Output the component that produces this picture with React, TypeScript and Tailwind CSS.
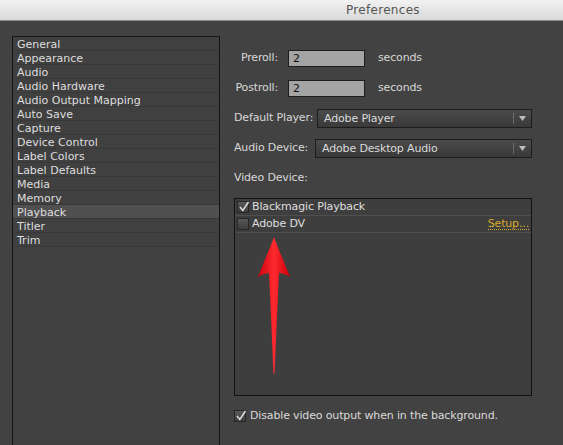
import React from 'react';

const categories = [
  'General',
  'Appearance',
  'Audio',
  'Audio Hardware',
  'Audio Output Mapping',
  'Auto Save',
  'Capture',
  'Device Control',
  'Label Colors',
  'Label Defaults',
  'Media',
  'Memory',
  'Playback',
  'Titler',
  'Trim',
];

const font = { fontFamily: '"DejaVu Sans", "Liberation Sans", sans-serif' };

const CheckBox: React.FC<{ checked?: boolean }> = ({ checked }) => (
  <span className="relative inline-block w-[12px] h-[12px] border border-[#262626] bg-gradient-to-b from-[#5a5a5a] to-[#3c3c3c] shrink-0">
    {checked && (
      <svg className="absolute left-[0px] top-[-1px]" width="12" height="12" viewBox="0 0 12 12">
        <path d="M2 6 L4.8 9.5 L10.5 1" fill="none" stroke="#dcdcdc" strokeWidth="1.5" />
      </svg>
    )}
  </span>
);

const Dropdown: React.FC<{ value: string; width: string }> = ({ value, width }) => (
  <div className={`flex items-center h-[19px] ${width} border border-[#1c1c1c] bg-gradient-to-b from-[#4b4b4b] to-[#393939] text-[#dadada]`}>
    <span className="flex-1 pl-[6px] text-[11px] leading-none">{value}</span>
    <span className="w-px h-[11px] bg-[#6a6a6a]" />
    <span className="w-[17px] flex justify-center">
      <svg width="7" height="5" viewBox="0 0 7 5">
        <path d="M0 0 H7 L3.5 5 Z" fill="#bdbdbd" />
      </svg>
    </span>
  </div>
);

const RedArrow: React.FC = () => (
  <svg className="absolute left-[22px] top-[37px]" width="34" height="140" viewBox="0 0 34 140">
    <defs>
      <linearGradient id="ar" x1="0" x2="1" y1="0" y2="0">
        <stop offset="0" stopColor="#c8000a" />
        <stop offset="0.5" stopColor="#ff2a2f" />
        <stop offset="1" stopColor="#c8000a" />
      </linearGradient>
    </defs>
    <path
      d="M17 1 C13 12 6 28 1 41 C6 38 10 37 12 37 L16.5 138 L17.5 138 L22 37 C24 37 28 38 33 41 C28 28 21 12 17 1 Z"
      fill="url(#ar)"
    />
  </svg>
);

export default function App() {
  return (
    <div className="w-[563px] h-[445px] overflow-hidden bg-[#424242] flex flex-col" style={font}>
      <div className="h-[21px] shrink-0 bg-gradient-to-b from-[#f2f2f2] to-[#d9d9d9] border-b border-[#8c8c8c] flex items-center">
        <span className="ml-[346px] text-[12px] text-[#555555] leading-none tracking-[0.3px]">Preferences</span>
      </div>
      <div className="flex flex-1">
        <div className="ml-[12px] mt-[15px] w-[208px] h-[460px] border border-[#141414] bg-[#404040] shrink-0">
          {categories.map((c) => (
            <div
              key={c}
              className={`h-[14px] pl-[4px] pt-[1px] border-b border-[#383838] text-[11px] leading-[13px] text-[#dedede] ${
                c === 'Playback' ? 'bg-[#505050]' : ''
              }`}
            >
              {c}
            </div>
          ))}
        </div>

        <div className="ml-[14px] flex flex-col text-[11px] tracking-[-0.15px] text-[#d8d8d8]">
          <div className="mt-[29px] flex items-center">
            <span className="w-[44px] text-right">Preroll:</span>
            <div className="ml-[10px] w-[77px] h-[17px] bg-[#a4a4a4] border border-[#1e1e1e] text-[#111] pl-[4px] leading-[15px]">2</div>
            <span className="ml-[13px]">seconds</span>
          </div>
          <div className="mt-[13px] flex items-center">
            <span className="w-[44px] text-right">Postroll:</span>
            <div className="ml-[10px] w-[77px] h-[17px] bg-[#a4a4a4] border border-[#1e1e1e] text-[#111] pl-[4px] leading-[15px]">2</div>
            <span className="ml-[13px]">seconds</span>
          </div>
          <div className="mt-[12px] flex items-center">
            <span className="w-[83px]">Default Player:</span>
            <Dropdown value="Adobe Player" width="w-[215px]" />
          </div>
          <div className="mt-[11px] flex items-center">
            <span className="w-[81px]">Audio Device:</span>
            <Dropdown value="Adobe Desktop Audio" width="w-[217px]" />
          </div>
          <div className="mt-[14px] leading-none">Video Device:</div>

          <div className="relative mt-[15px] w-[298px] h-[198px] border border-[#111] bg-[#3e3e3e]">
            <div className="h-[17px] flex items-center pl-[2px] border-b border-[#4e4e4e]">
              <CheckBox checked />
              <span className="ml-[3px] text-[#dedede]">Blackmagic Playback</span>
            </div>
            <div className="h-[17px] flex items-center pl-[2px] border-b border-[#4e4e4e]">
              <CheckBox />
              <span className="ml-[3px] text-[#dedede]">Adobe DV</span>
              <span className="ml-auto mr-[2px] text-[#d9ab2b] border-b border-dotted border-[#d9ab2b] leading-[11px]">Setup...</span>
            </div>
            <RedArrow />
          </div>

          <div className="mt-[12px] flex items-center">
            <CheckBox checked />
            <span className="ml-[4px] text-[#dadada]">Disable video output when in the background.</span>
          </div>
        </div>
      </div>
    </div>
  );
}
